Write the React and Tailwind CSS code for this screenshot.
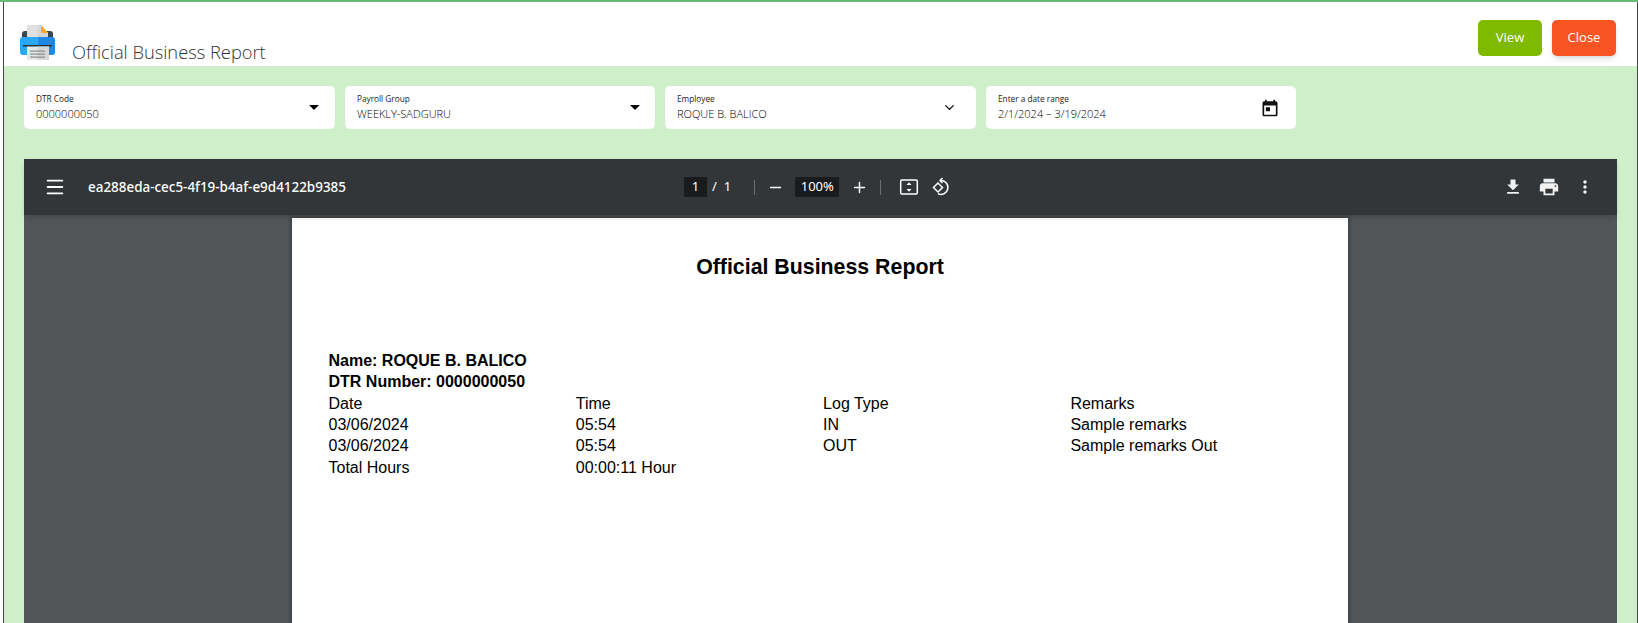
import { Menu, Minus, Plus, ChevronDown } from 'lucide-react'

const uiFont = "font-['Open_Sans',sans-serif]"

const PrinterLogo = () => (
  <svg width="36" height="36" viewBox="0 0 36 36">
    <rect x="2" y="6" width="31" height="12" rx="3" fill="#37474f" />
    <path d="M7 0h14l7 8v12H7z" fill="#e0e0e0" />
    <path d="M17.5 0H21l7 8v12H17.5z" fill="#d6d6d6" />
    <path d="M21 0l7 8h-7z" fill="#ffa726" />
    <path d="M3 12h14.5v18H3a3 3 0 0 1-3-3V15a3 3 0 0 1 3-3z" fill="#29a9f5" />
    <path d="M17.5 12H32a3 3 0 0 1 3 3v12a3 3 0 0 1-3 3H17.5z" fill="#1e88e5" />
    <rect x="3" y="20" width="29" height="1.6" fill="#263238" />
    <path d="M7 21.6h22V35H7z" fill="#e8e8e8" />
    <path d="M17.5 21.6H29V35H17.5z" fill="#d6d6d6" />
    <path d="M10 25.5h15v1.3H10zM10 28.5h15v1.3H10zM10 31.5h15v1.3H10z" fill="#8a8f92" />
  </svg>
)

const Field = ({ label, value, width, children }) => (
  <div className={`${width} h-[43px] bg-white rounded-[5px] pl-3 pr-4 flex items-center justify-between ${uiFont}`}>
    <div className="min-w-0 pb-[1px]">
      <div className="text-[8.25px] leading-[10px] text-[#222] mb-[2px]">{label}</div>
      <div className="text-[11px] leading-[15px] font-light text-black">{value}</div>
    </div>
    {children}
  </div>
)

const Caret = ({ className = '' }) => (
  <div className={`${className} w-0 h-0 border-x-[5px] border-x-transparent border-t-[5px] border-t-black`} />
)

const Sep = () => <div className="w-px h-[15px] bg-[#6b6f72]" />

export default function App() {
  return (
    <div className="h-[623px] overflow-hidden bg-white border-t-2 border-t-[#66bb77] pl-[3px]">
      <div className="h-full bg-[#cfefca] border-x border-x-[#444] flex flex-col">
        <div className="h-[64px] shrink-0 bg-white flex justify-between pl-[16px] pr-[21px]">
          <div className="flex items-start pt-[23px]">
            <PrinterLogo />
            <span className={`ml-[16px] mt-[15px] text-[18.3px] leading-[24px] font-light text-[#333] ${uiFont}`}>
              Official Business Report
            </span>
          </div>
          <div className={`flex gap-[10px] pt-[18px] text-[13px] text-white ${uiFont}`}>
            <button className="w-[64px] h-[36px] rounded-[5px] bg-[#80ba00]">View</button>
            <button className="w-[64px] h-[36px] rounded-[5px] bg-[#f95423] shadow-md">Close</button>
          </div>
        </div>

        <div className="flex gap-[10px] pl-[20px] pt-[20px]">
          <Field label="DTR Code" value="0000000050" width="w-[311px]"><Caret /></Field>
          <Field label="Payroll Group" value="WEEKLY-SADGURU" width="w-[310px]"><Caret className="-mr-[1px]" /></Field>
          <Field label="Employee" value="ROQUE B. BALICO" width="w-[311px]">
            <ChevronDown size={15} strokeWidth={2.2} className="text-[#111] mr-[3px]" />
          </Field>
          <Field label="Enter a date range" value="2/1/2024 – 3/19/2024" width="w-[310px]">
            <svg width="20" height="20" viewBox="0 0 24 24" fill="#111">
              <path d="M19 4h-1V2h-2v2H8V2H6v2H5c-1.1 0-2 .9-2 2v14c0 1.1.9 2 2 2h14c1.1 0 2-.9 2-2V6c0-1.1-.9-2-2-2zm0 16H5V9h14v11zM7 11h5v5H7z" />
            </svg>
          </Field>
        </div>

        <div className="ml-[20px] mt-[30px] w-[1593px] grow flex flex-col">
          <div className="h-[56px] shrink-0 bg-[#323639] text-white flex items-center relative font-['Noto_Sans',sans-serif] shadow-md z-10">
            <Menu size={22} strokeWidth={2} className="ml-[20px]" />
            <span className="ml-[22px] text-[13.45px] font-medium">ea288eda-cec5-4f19-b4af-e9d4122b9385</span>
            <div className="absolute left-[660px] flex items-center text-[13px]">
              <span className="w-[23px] h-[20px] bg-[#191b1c] flex items-center justify-center">1</span>
              <span className="ml-[5px]">/</span>
              <span className="ml-[7px]">1</span>
              <div className="ml-[23px]"><Sep /></div>
              <Minus size={17} strokeWidth={2} className="ml-[12px]" />
              <span className="ml-[11px] w-[44px] h-[20px] bg-[#191b1c] flex items-center justify-center">100%</span>
              <Plus size={17} strokeWidth={2} className="ml-[12px]" />
              <div className="ml-[12px]"><Sep /></div>
              <svg width="20" height="20" viewBox="0 0 20 20" className="ml-[18px]" fill="none" stroke="#fff" strokeWidth="1.5">
                <rect x="1.7" y="3" width="16.6" height="14" rx="1.2" />
                <path d="M10 5.2L7.5 8h5zM10 14.8L7.5 12h5z" fill="#fff" stroke="none" />
              </svg>
              <svg width="20" height="20" viewBox="0 0 20 20" className="ml-[12px]" fill="none" stroke="#fff" strokeWidth="1.5">
                <path d="M7 6l-4.5 4.5L7 15l4.5-4.5z" />
                <path d="M9 3.5a7 7 0 1 1 -2 13.3" />
                <path d="M11.5 1L9 3.5 11.5 6" />
              </svg>
            </div>
            <div className="ml-auto flex items-center mr-[22px]">
              <svg width="20" height="20" viewBox="0 0 24 24" fill="#f1f1f1"><path d="M19 9h-4V3H9v6H5l7 7 7-7zM5 18v2h14v-2H5z" /></svg>
              <svg width="22" height="22" viewBox="0 0 24 24" className="ml-[15px]" fill="#f1f1f1"><path d="M19 8H5c-1.66 0-3 1.34-3 3v6h4v4h12v-4h4v-6c0-1.66-1.34-3-3-3zm-3 11H8v-5h8v5zm3-7c-.55 0-1-.45-1-1s.45-1 1-1 1 .45 1 1-.45 1-1 1zm-1-9H6v4h12V3z" /></svg>
              <svg width="20" height="20" viewBox="0 0 24 24" className="ml-[15px]" fill="#f1f1f1"><path d="M12 8c1.1 0 2-.9 2-2s-.9-2-2-2-2 .9-2 2 .9 2 2 2zm0 2c-1.1 0-2 .9-2 2s.9 2 2 2 2-.9 2-2-.9-2-2-2zm0 6c-1.1 0-2 .9-2 2s.9 2 2 2 2-.9 2-2-.9-2-2-2z" /></svg>
            </div>
          </div>
          <div className="grow bg-[#525659] overflow-hidden pl-[268px] pt-[3px]">
            <div className="w-[1056px] h-[600px] bg-white shadow-[0_0_3px_2px_rgba(0,0,0,0.22)] text-black font-['Liberation_Sans',sans-serif] text-[16px] leading-[21.33px]">
              <h1 className="pt-[37px] text-center text-[21.33px] leading-[24px] font-bold">Official Business Report</h1>
              <div className="pl-[36.5px]">
                <div className="mt-[71px] font-bold">Name: ROQUE B. BALICO</div>
                <div className="font-bold">DTR Number: 0000000050</div>
                <div className="grid grid-cols-[247.3px_247.3px_247.3px_1fr]">
                  <div>Date</div><div>Time</div><div>Log Type</div><div>Remarks</div>
                  <div>03/06/2024</div><div>05:54</div><div>IN</div><div>Sample remarks</div>
                  <div>03/06/2024</div><div>05:54</div><div>OUT</div><div>Sample remarks Out</div>
                  <div>Total Hours</div><div>00:00:11 Hour</div>
                </div>
              </div>
            </div>
          </div>
        </div>
      </div>
    </div>
  )
}
